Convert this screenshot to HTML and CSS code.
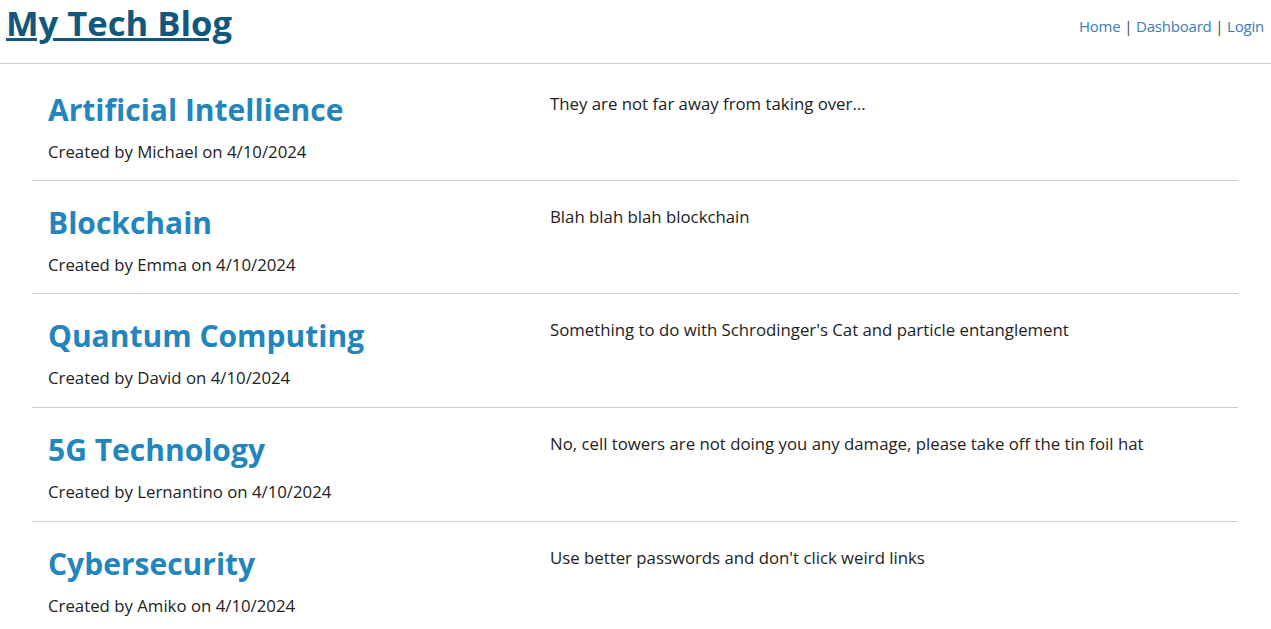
FILE: index.html
```html
<!DOCTYPE html>
<html lang="en">
<head>
<meta charset="utf-8">
<title>My Tech Blog</title>
<link rel="stylesheet" href="styles.css">
</head>
<body>
<header class="site-header">
  <h1 class="site-title"><a href="#">My Tech Blog</a></h1>
  <nav class="site-nav">
    <a href="#">Home</a> | <a href="#">Dashboard</a> | <a href="#">Login</a>
  </nav>
</header>
<main class="posts">
  <article class="post">
    <div class="post-head">
      <h2 class="post-title">Artificial Intellience</h2>
      <p class="post-meta">Created by Michael on 4/10/2024</p>
    </div>
    <p class="post-body">They are not far away from taking over...</p>
  </article>
  <article class="post">
    <div class="post-head">
      <h2 class="post-title">Blockchain</h2>
      <p class="post-meta">Created by Emma on 4/10/2024</p>
    </div>
    <p class="post-body">Blah blah blah blockchain</p>
  </article>
  <article class="post">
    <div class="post-head">
      <h2 class="post-title">Quantum Computing</h2>
      <p class="post-meta">Created by David on 4/10/2024</p>
    </div>
    <p class="post-body">Something to do with Schrodinger's Cat and particle entanglement</p>
  </article>
  <article class="post">
    <div class="post-head">
      <h2 class="post-title">5G Technology</h2>
      <p class="post-meta">Created by Lernantino on 4/10/2024</p>
    </div>
    <p class="post-body">No, cell towers are not doing you any damage, please take off the tin foil hat</p>
  </article>
  <article class="post">
    <div class="post-head">
      <h2 class="post-title">Cybersecurity</h2>
      <p class="post-meta">Created by Amiko on 4/10/2024</p>
    </div>
    <p class="post-body">Use better passwords and don't click weird links</p>
  </article>
</main>
</body>
</html>
```
FILE: styles.css
```css
html, body {
  margin: 0;
  padding: 0;
  background: #ffffff;
}

body {
  font-family: "Open Sans", "Noto Sans", "Liberation Sans", sans-serif;
  font-size: 16.8px;
  color: #222222;
}

.site-header {
  display: flex;
  justify-content: space-between;
  align-items: flex-start;
  height: 63px;
  padding: 0 7px 0 6px;
  border-bottom: 1px solid #cccccc;
}

.site-title {
  margin: 0;
  font-size: 34.6px;
  line-height: 46px;
  font-weight: 700;
}

.site-title a {
  color: #11587c;
  text-decoration: underline;
  text-decoration-thickness: 3px;
  text-underline-offset: 2px;
}

.site-nav {
  margin-top: 14px;
  font-size: 15px;
  line-height: 24px;
  letter-spacing: -0.2px;
  color: #444444;
}

.site-nav a {
  color: #3a7db4;
  text-decoration: none;
}

.posts {
  padding: 3px 33px 0 32px;
}

.post {
  display: grid;
  grid-template-columns: 502px 1fr;
  padding: 22px 16px 16.67px;
  border-bottom: 1px solid #cccccc;
}

.post:first-child {
  padding-top: 23px;
  padding-bottom: 15.67px;
}

.post:last-child {
  border-bottom: none;
}

.post-title {
  margin: 0;
  font-size: 30px;
  line-height: 40px;
  font-weight: 700;
  color: #2385bd;
}

.post-meta {
  margin: 10px 0 0;
  line-height: 24px;
}

.post-body {
  margin: 2px 0 0;
  line-height: 24px;
}
```
